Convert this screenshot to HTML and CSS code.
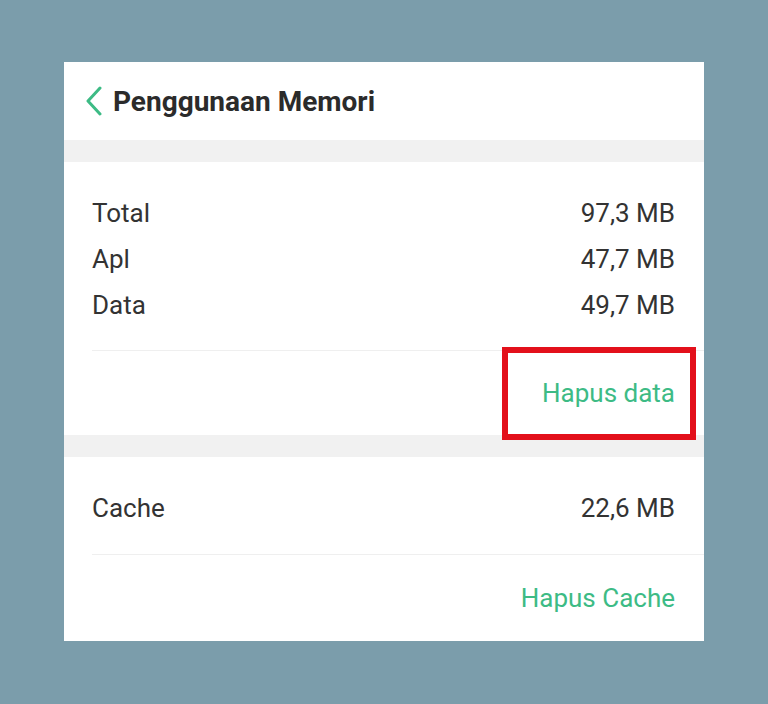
FILE: index.html
```html
<!DOCTYPE html>
<html>
	<head>
		<title>Penggunaan Memori</title>
		<meta charset="utf-8"/>
		<link rel="stylesheet" href="styles.css">
	</head>
	<body>
		<div id="card">
			<div class="header">
				<svg class="back" width="20" height="30" viewBox="0 0 20 30"><path d="M16 2 L4 15 L16 28" fill="none" stroke="#3dbb85" stroke-width="3" stroke-linecap="round" stroke-linejoin="round"/></svg>
				<span class="title">Penggunaan Memori</span>
			</div>
			<div class="band"></div>
			<div class="section">
				<div class="row"><span>Total</span><span>97,3 MB</span></div>
				<div class="row"><span>Apl</span><span>47,7 MB</span></div>
				<div class="row"><span>Data</span><span>49,7 MB</span></div>
				<div class="action first">
					<span class="link">Hapus data</span>
					<div class="mark"></div>
				</div>
			</div>
			<div class="band"></div>
			<div class="section">
				<div class="row"><span>Cache</span><span>22,6 MB</span></div>
				<div class="action second">
					<span class="link">Hapus Cache</span>
				</div>
			</div>
		</div>
	</body>
</html>
```

FILE: styles.css
```css
html { width:100%; height:100% }
body {
	margin:0px;
	background:#7b9dab;
	font-family:Roboto, "Liberation Sans", sans-serif;
	color:#333;
}
#card {
	margin:62px 0 0 64px;
	width:640px;
	background:#fff;
}
.header {
	height:78px;
	display:flex;
	align-items:center;
	padding-left:20px;
	gap:9px;
}
.header .back { flex:none; }
.title {
	font-size:28px;
	font-weight:bold;
	color:#2b2b2b;
}
.band {
	height:22px;
	background:#f1f1f1;
}
.section {
	padding:28px 0 0 28px;
}
.row {
	height:46px;
	display:flex;
	justify-content:space-between;
	align-items:center;
	padding-right:29px;
	font-size:26px;
	color:#333;
}
.action {
	position:relative;
	margin-top:22px;
	border-top:1px solid #efefef;
	display:flex;
	justify-content:flex-end;
	align-items:center;
	padding-right:29px;
}
.action.first { height:84px; }
.action.second { height:86px; margin-top:23px; }
.link {
	font-size:26px;
	color:#3dbb85;
}
.mark {
	position:absolute;
	left:410px;
	top:-4px;
	width:182px;
	height:81px;
	border:6px solid #e3101b;
}
```
